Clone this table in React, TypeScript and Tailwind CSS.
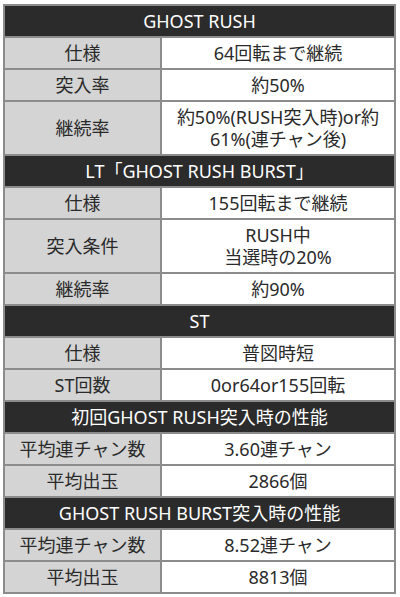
type Row = { label: string; value: React.ReactNode };
type Section = { title: string; rows: Row[] };

const sections: Section[] = [
  {
    title: "GHOST RUSH",
    rows: [
      { label: "仕様", value: "64回転まで継続" },
      { label: "突入率", value: "約50%" },
      {
        label: "継続率",
        value: (
          <>
            約50%(RUSH突入時)or約
            <br />
            61%(連チャン後)
          </>
        ),
      },
    ],
  },
  {
    title: "LT「GHOST RUSH BURST」",
    rows: [
      { label: "仕様", value: "155回転まで継続" },
      {
        label: "突入条件",
        value: (
          <>
            RUSH中
            <br />
            当選時の20%
          </>
        ),
      },
      { label: "継続率", value: "約90%" },
    ],
  },
  {
    title: "ST",
    rows: [
      { label: "仕様", value: "普図時短" },
      { label: "ST回数", value: "0or64or155回転" },
    ],
  },
  {
    title: "初回GHOST RUSH突入時の性能",
    rows: [
      { label: "平均連チャン数", value: "3.60連チャン" },
      { label: "平均出玉", value: "2866個" },
    ],
  },
  {
    title: "GHOST RUSH BURST突入時の性能",
    rows: [
      { label: "平均連チャン数", value: "8.52連チャン" },
      { label: "平均出玉", value: "8813個" },
    ],
  },
];

export default function App() {
  return (
    <div className="h-[597px] w-[400px] bg-white pl-[3px] pt-[4px] font-['Noto_Sans','Noto_Sans_CJK_JP',sans-serif] text-[18px] leading-[22px] text-[#2a2a2a]">
      <table className="w-[393px] table-fixed border-collapse border-2 border-[#8c8c8c]">
        <colgroup>
          <col className="w-[157px]" />
          <col />
        </colgroup>
        <tbody>
          {sections.map((section) => (
            <>
              <tr key={section.title}>
                <th
                  colSpan={2}
                  className="h-[32px] border-2 border-[#8c8c8c] bg-[#2b2b2b] p-0 text-center font-normal text-white"
                >
                  {section.title}
                </th>
              </tr>
              {section.rows.map((row) => (
                <tr key={section.title + row.label}>
                  <td className="h-[32px] border-2 border-[#8c8c8c] bg-[#d4d4d4] py-[4px] text-center">
                    {row.label}
                  </td>
                  <td className="h-[32px] border-2 border-[#8c8c8c] bg-white py-[4px] text-center">
                    {row.value}
                  </td>
                </tr>
              ))}
            </>
          ))}
        </tbody>
      </table>
    </div>
  );
}
